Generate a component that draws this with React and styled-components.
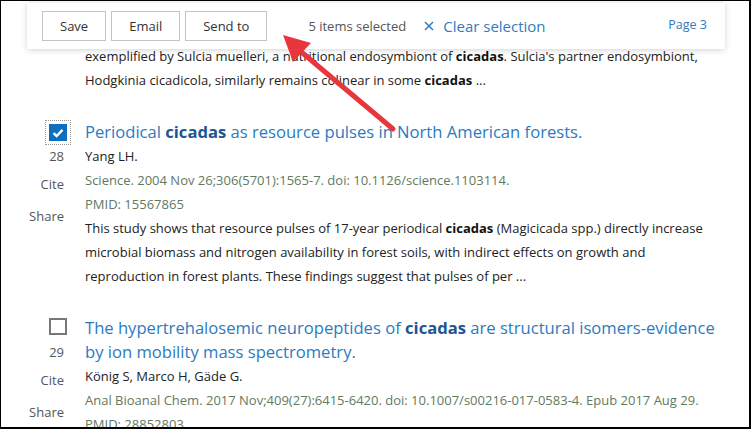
import React from 'react';
import styled, { createGlobalStyle } from 'styled-components';

const GlobalStyle = createGlobalStyle`
  body {
    margin: 0;
    font-family: "Open Sans", "Noto Sans", sans-serif;
    background: #fff;
  }
`

const Frame = styled.div`
  position: relative;
  width: 751px;
  height: 429px;
  box-sizing: border-box;
  border: 1px solid #000;
  border-right-width: 2px;
  border-bottom-width: 2px;
  background: #fff;
  overflow: hidden;
`

const Toolbar = styled.div`
  position: absolute;
  left: 26px;
  top: 2px;
  width: 698px;
  height: 46px;
  box-sizing: border-box;
  padding: 0 18px 0 15px;
  display: flex;
  align-items: center;
  background: #fff;
  box-shadow: 0 1px 6px rgba(0, 0, 0, 0.18);
  z-index: 5;
`

const Button = styled.button`
  height: 30px;
  padding: 0 17px;
  margin-right: 5px;
  border: 1px solid #c4c4c4;
  background: #fff;
  color: #333;
  font-family: inherit;
  font-size: 13px;
`

const Selected = styled.span`
  margin-left: 36px;
  font-size: 13px;
  color: #555;
`

const ClearLink = styled.span`
  margin-left: 18px;
  font-size: 15px;
  color: #2f7bbd;
  display: flex;
  align-items: center;
  gap: 9px;
`

const PageLabel = styled.span`
  margin-left: auto;
  font-size: 12.5px;
  color: #2f7bbd;
  margin-top: -3px;
`

const Results = styled.div`
  padding-top: 43px;
`

const Snippet = styled.p`
  margin: 0;
  padding-left: ${p => (p.lead ? 84 : 0)}px;
  font-size: 13px;
  line-height: 24px;
  color: #222;
  b { font-weight: 700; color: #111; }
`

const Article = styled.div`
  display: grid;
  grid-template-columns: 84px 636px;
  margin-top: 28px;
`

const Side = styled.div`
  display: flex;
  flex-direction: column;
  align-items: flex-end;
  padding-right: 21px;
  font-size: 13px;
  color: #555;
`

const Checkbox = styled.div`
  width: 18px;
  height: 17px;
  box-sizing: border-box;
  margin: ${p => (p.checked ? '4px' : '2px')} -3px 0 0;
  display: flex;
  align-items: center;
  justify-content: center;
  background: ${p => (p.checked ? '#0e6fc0' : '#fff')};
  border: ${p => (p.checked ? 'none' : '2px solid #777')};
  outline: ${p => (p.checked ? '1.5px dotted #999' : 'none')};
  outline-offset: 3px;
`

const Count = styled.span`
  margin-top: ${p => (p.checked ? '5px' : '7px')};
  line-height: 20px;
`

const SideLink = styled.span`
  margin-top: ${p => p.gap}px;
  line-height: 20px;
`

const Body = styled.div`
  min-width: 0;
`

const Title = styled.a`
  display: block;
  font-size: 16.6px;
  line-height: 24px;
  color: #2b7bc1;
  text-decoration: none;
  b { color: #205493; font-weight: 700; }
`

const Authors = styled.div`
  font-size: 13px;
  line-height: 24px;
  color: #222;
`

const Citation = styled.div`
  font-size: 13px;
  line-height: 24px;
  color: #5f7a5e;
`

const Arrow = styled.svg`
  position: absolute;
  left: 270px;
  top: 20px;
  z-index: 6;
  pointer-events: none;
`

const Check = () => (
  <svg width="12" height="10" viewBox="0 0 12 10">
    <path d="M1.5 5.2 L4.6 8 L10.5 1.8" fill="none" stroke="#fff" strokeWidth="2.4" />
  </svg>
)

const articles = [
  {
    n: 28,
    checked: true,
    title: [['Periodical ', false], ['cicadas', true], [' as resource pulses in North American forests.', false]],
    authors: 'Yang LH.',
    cite: 'Science. 2004 Nov 26;306(5701):1565-7. doi: 10.1126/science.1103114.',
    pmid: 'PMID: 15567865',
    snippet: [
      ['This study shows that resource pulses of 17-year periodical ', false],
      ['cicadas', true],
      [' (Magicicada spp.) directly increase microbial biomass and nitrogen availability in forest soils, with indirect effects on growth and reproduction in forest plants. These findings suggest that pulses of per ...', false],
    ],
  },
  {
    n: 29,
    checked: false,
    title: [['The hypertrehalosemic neuropeptides of ', false], ['cicadas', true], [' are structural isomers-evidence by ion mobility mass spectrometry.', false]],
    authors: 'König S, Marco H, Gäde G.',
    cite: 'Anal Bioanal Chem. 2017 Nov;409(27):6415-6420. doi: 10.1007/s00216-017-0583-4. Epub 2017 Aug 29.',
    pmid: 'PMID: 28852803',
    snippet: [],
  },
]

const rich = parts => parts.map(([t, bold], i) => (bold ? <b key={i}>{t}</b> : <React.Fragment key={i}>{t}</React.Fragment>))

const App = () => (
  <Frame>
    <GlobalStyle />
    <Toolbar>
      <Button>Save</Button>
      <Button>Email</Button>
      <Button>Send to</Button>
      <Selected>5 items selected</Selected>
      <ClearLink>
        <svg width="10" height="10" viewBox="0 0 10 10">
          <path d="M1 1 L9 9 M9 1 L1 9" stroke="#2f7bbd" strokeWidth="1.5" />
        </svg>
        Clear selection
      </ClearLink>
      <PageLabel>Page 3</PageLabel>
    </Toolbar>

    <Results>
      <Snippet lead>
        exemplified by Sulcia muelleri, a nutritional endosymbiont of <b>cicadas</b>. Sulcia's partner endosymbiont,
        <br />
        Hodgkinia cicadicola, similarly remains colinear in some <b>cicadas</b> ...
      </Snippet>

      {articles.map(a => (
        <Article key={a.n}>
          <Side>
            <Checkbox checked={a.checked}>{a.checked && <Check />}</Checkbox>
            <Count checked={a.checked}>{a.n}</Count>
            <SideLink gap={8}>Cite</SideLink>
            <SideLink gap={12}>Share</SideLink>
          </Side>
          <Body>
            <Title href="#">{rich(a.title)}</Title>
            <Authors>{a.authors}</Authors>
            <Citation>{a.cite}</Citation>
            <Citation>{a.pmid}</Citation>
            {a.snippet.length > 0 && <Snippet>{rich(a.snippet)}</Snippet>}
          </Body>
        </Article>
      ))}
    </Results>

    <Arrow width="130" height="115" viewBox="0 0 130 115">
      <line x1="22" y1="24" x2="122" y2="108" stroke="#e8373c" strokeWidth="5" strokeLinecap="round" />
      <polygon points="12,14 40,22 22,41" fill="#e8373c" />
    </Arrow>
  </Frame>
)

export default App;
